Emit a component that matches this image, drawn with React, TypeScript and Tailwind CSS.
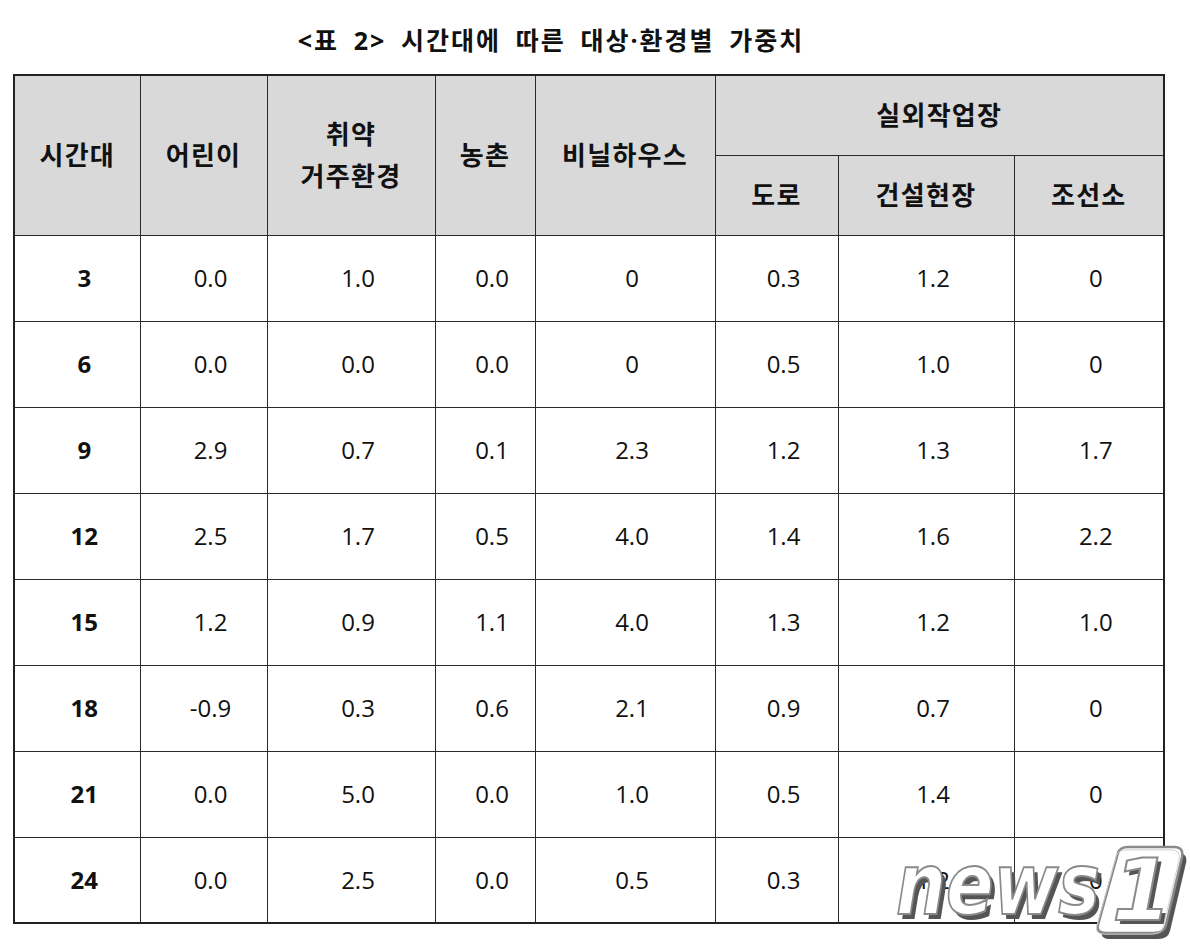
import React from "react";

const rows: string[][] = [
  ["3", "0.0", "1.0", "0.0", "0", "0.3", "1.2", "0"],
  ["6", "0.0", "0.0", "0.0", "0", "0.5", "1.0", "0"],
  ["9", "2.9", "0.7", "0.1", "2.3", "1.2", "1.3", "1.7"],
  ["12", "2.5", "1.7", "0.5", "4.0", "1.4", "1.6", "2.2"],
  ["15", "1.2", "0.9", "1.1", "4.0", "1.3", "1.2", "1.0"],
  ["18", "-0.9", "0.3", "0.6", "2.1", "0.9", "0.7", "0"],
  ["21", "0.0", "5.0", "0.0", "1.0", "0.5", "1.4", "0"],
  ["24", "0.0", "2.5", "0.0", "0.5", "0.3", "1.2", "0"],
];

const widths = [126, 127, 168, 100, 180, 123, 176, 150];

const th =
  "border-[1.5px] border-[#2a2a2a] bg-[#d9d9d9] text-center align-middle font-bold text-[26px] tracking-[0.05em] text-[#111] p-0";
const td =
  "border-[1.5px] border-[#2a2a2a] text-center align-middle text-[24px] text-[#111] pl-[14px] pr-0 py-0 h-[86px]";

function Watermark() {
  const box =
    "M 232 10 Q 234 4 242 4 L 288 4 Q 298 4 296 14 L 280 82 Q 278 90 268 90 L 220 90 Q 210 90 212 82 Z";
  return (
    <svg
      className="absolute left-[886px] top-[843px]"
      width="304"
      height="104"
      viewBox="0 0 304 104"
    >
      <path d={box} transform="translate(4,6)" fill="#555" />
      <path d={box} fill="#ffffff" stroke="#8a8a8a" strokeWidth="2.5" />
      <path d={box} transform="translate(3,3) scale(0.98)" fill="none" stroke="#cfcfcf" strokeWidth="1" />
      <text
        x="14"
        y="76"
        fontFamily="'DejaVu Sans', sans-serif"
        fontWeight="bold"
        fontStyle="italic"
        fontSize="86"
        textLength="204"
        lengthAdjust="spacingAndGlyphs"
        fill="#555"
      >
        news
      </text>
      <text
        x="10"
        y="71"
        fontFamily="'DejaVu Sans', sans-serif"
        fontWeight="bold"
        fontStyle="italic"
        fontSize="86"
        textLength="204"
        lengthAdjust="spacingAndGlyphs"
        fill="#ffffff"
        stroke="#8a8a8a"
        strokeWidth="2"
      >
        news
      </text>
      <text
        x="230"
        y="81"
        fontFamily="'DejaVu Sans', sans-serif"
        fontWeight="bold"
        fontStyle="italic"
        fontSize="86"
        fill="#555"
      >
        1
      </text>
      <text
        x="226"
        y="77"
        fontFamily="'DejaVu Sans', sans-serif"
        fontWeight="bold"
        fontStyle="italic"
        fontSize="86"
        fill="#ffffff"
        stroke="#8a8a8a"
        strokeWidth="2"
      >
        1
      </text>
    </svg>
  );
}

export default function App() {
  return (
    <div
      className="relative w-[1190px] h-[948px] bg-white overflow-hidden"
      style={{ fontFamily: "'Open Sans', 'Noto Sans CJK KR', sans-serif" }}
    >
      <div className="flex justify-center pt-[21px] h-[74px] pr-[88px]">
        <h1
          className="text-[25px] font-bold tracking-[0.08em] text-[#111] leading-[38px]"
          style={{ wordSpacing: "0.25em" }}
        >
          &lt;표 2&gt; 시간대에 따른 대상·환경별 가중치
        </h1>
      </div>
      <div className="pl-[13px]">
        <table className="border-collapse border-2 border-[#222] table-fixed w-[1150px]">
          <colgroup>
            {widths.map((w, i) => (
              <col key={i} style={{ width: w }} />
            ))}
          </colgroup>
          <thead>
            <tr className="h-[80px]">
              <th rowSpan={2} className={th}>시간대</th>
              <th rowSpan={2} className={th}>어린이</th>
              <th rowSpan={2} className={th}>
                <div className="leading-[42px]">취약</div>
                <div className="leading-[42px]">거주환경</div>
              </th>
              <th rowSpan={2} className={th}>농촌</th>
              <th rowSpan={2} className={th}>비닐하우스</th>
              <th colSpan={3} className={th}>실외작업장</th>
            </tr>
            <tr className="h-[80px]">
              <th className={th}>도로</th>
              <th className={th}>건설현장</th>
              <th className={th}>조선소</th>
            </tr>
          </thead>
          <tbody>
            {rows.map((r, i) => (
              <tr key={i}>
                {r.map((c, j) => (
                  <td key={j} className={td + (j === 0 ? " font-bold" : "")}>
                    {c}
                  </td>
                ))}
              </tr>
            ))}
          </tbody>
        </table>
      </div>
      <Watermark />
    </div>
  );
}
